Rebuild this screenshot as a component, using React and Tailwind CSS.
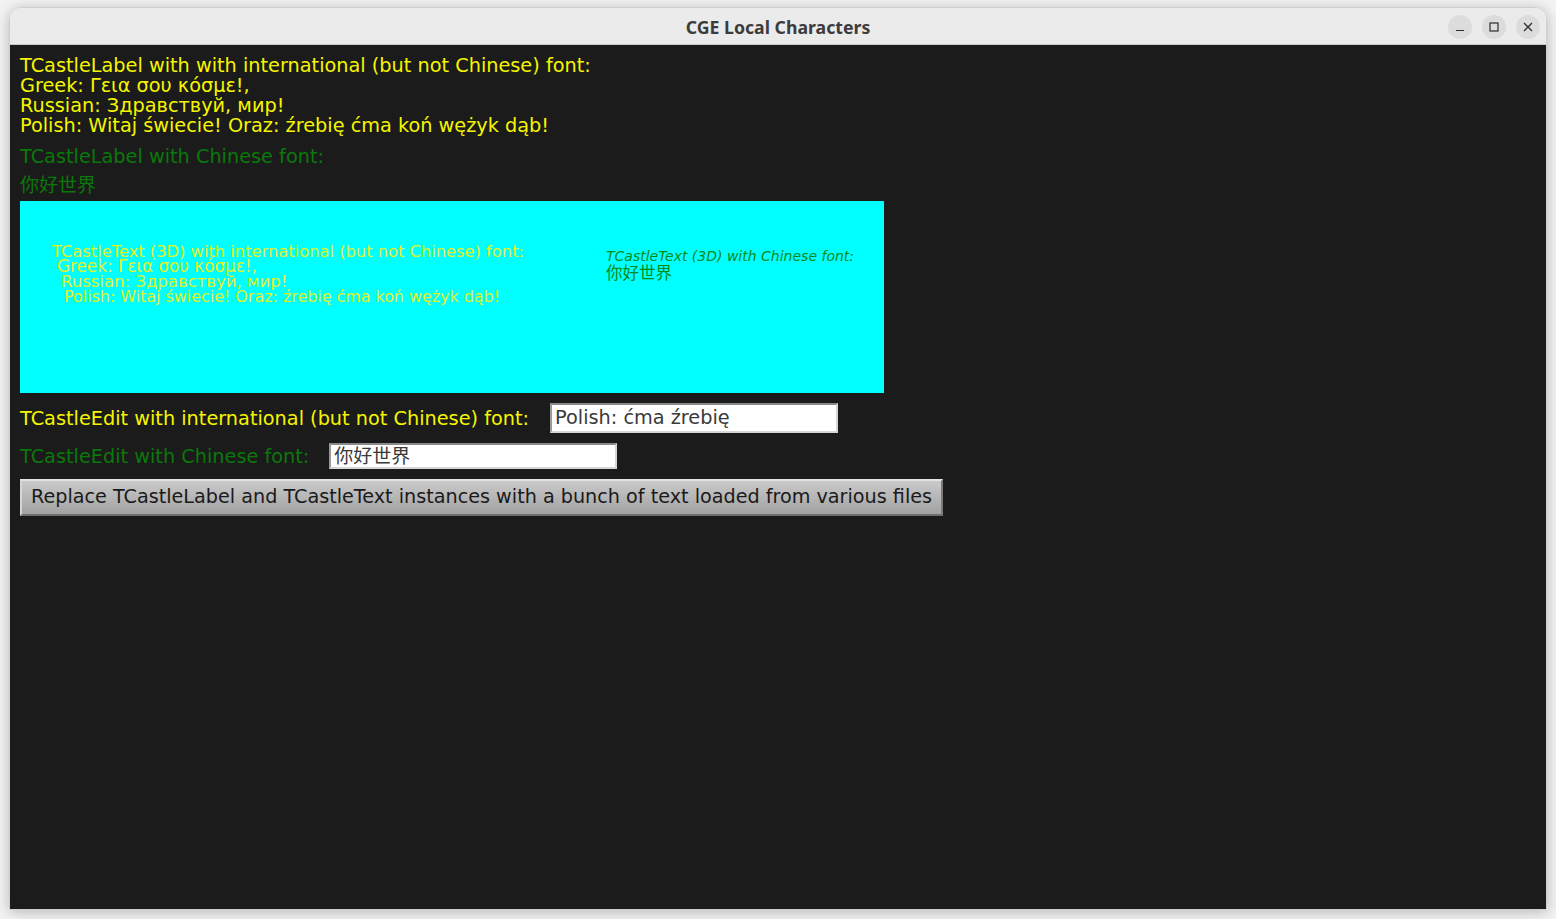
import React from 'react';

const SANS = { fontFamily: '"DejaVu Sans", "Noto Sans CJK SC", sans-serif' };

const TitleButton = ({ children }) => (
  <div className="w-[24px] h-[24px] rounded-full bg-[#dcdcdc] flex items-center justify-center text-[#2e2e2e]">
    {children}
  </div>
);

export default function App() {
  return (
    <div className="w-full h-[919px] bg-[#f3f3f3] pt-[7px] pl-[9px] overflow-hidden">
      <div className="w-[1538px] flex flex-col rounded-t-[12px] shadow-[0_2px_14px_rgba(0,0,0,0.25)] border border-[#cfcfcf] overflow-hidden">
        {/* title bar */}
        <div className="h-[37px] bg-[#ebebeb] border-b border-[#c9c9c9] flex items-center relative">
          <div
            className="flex-1 text-center pt-[2px] text-[17.7px] font-bold text-[#3c3c3c]"
            style={{ fontFamily: '"Noto Sans", "DejaVu Sans", sans-serif' }}
          >
            CGE Local Characters
          </div>
          <div className="absolute right-[6px] top-[7px] flex gap-[10px]">
            <TitleButton>
              <svg width="10" height="10" viewBox="0 0 10 10"><path d="M1 8.5h8" stroke="currentColor" strokeWidth="1.2" /></svg>
            </TitleButton>
            <TitleButton>
              <svg width="10" height="10" viewBox="0 0 10 10"><rect x="1" y="1" width="8" height="8" fill="none" stroke="currentColor" strokeWidth="1.2" /></svg>
            </TitleButton>
            <TitleButton>
              <svg width="10" height="10" viewBox="0 0 10 10"><path d="M1 1l8 8M9 1l-8 8" stroke="currentColor" strokeWidth="1.3" /></svg>
            </TitleButton>
          </div>
        </div>

        {/* content */}
        <div className="h-[864px] bg-[#1b1b1b] pt-[11px] px-[10px]" style={SANS}>
          <div className="text-[19.3px] leading-[20px] text-[#f5f500]">
            <div>TCastleLabel with with international (but not Chinese) font:</div>
            <div>Greek: Γεια σου κόσμε!,</div>
            <div>Russian: Здравствуй, мир!</div>
            <div>Polish: Witaj świecie! Oraz: źrebię ćma koń wężyk dąb!</div>
          </div>
          <div className="mt-[11px] text-[19.3px] leading-[20px] text-[#0a780a]">TCastleLabel with Chinese font:</div>
          <div className="mt-[8px] text-[19px] leading-[20px] text-[#0a780a]">你好世界</div>

          {/* 3D viewport */}
          <div className="mt-[6px] w-[864px] h-[192px] bg-[#00ffff] flex">
            <div className="pl-[32px] pt-[43px] w-[586px] leading-[15px] text-[#e2f21c]">
              <div className="text-[16.3px]">TCastleText (3D) with international (but not Chinese) font:</div>
              <div className="pl-[5px] text-[16.8px]">Greek: Γεια σου κόσμε!,</div>
              <div className="pl-[9px] text-[16.5px]">Russian: Здравствуй, мир!</div>
              <div className="pl-[12px] text-[15.9px]">Polish: Witaj świecie! Oraz: źrebię ćma koń wężyk dąb!</div>
            </div>
            <div className="pt-[47px] text-[#0a8a1a]">
              <div className="italic text-[14px] leading-[16px]">TCastleText (3D) with Chinese font:</div>
              <div className="mt-[1px] text-[16.5px] leading-[18px]">你好世界</div>
            </div>
          </div>

          {/* edits */}
          <div className="mt-[10px] flex items-center gap-[21px]">
            <div className="pt-[2px] text-[19.3px] leading-[28px] text-[#f5f500]">TCastleEdit with international (but not Chinese) font:</div>
            <div className="w-[288px] h-[30px] bg-white border-2 border-t-[#8a8a8a] border-l-[#9a9a9a] border-b-[#d6d6d6] border-r-[#d6d6d6] flex items-center px-[3px] text-[19.3px] text-[#3a3a3a]">
              Polish: ćma źrebię
            </div>
          </div>
          <div className="mt-[10px] flex items-center gap-[20px]">
            <div className="pt-[2px] text-[19.3px] leading-[24px] text-[#0a780a]">TCastleEdit with Chinese font:</div>
            <div className="w-[288px] h-[26px] bg-white border-2 border-t-[#8a8a8a] border-l-[#9a9a9a] border-b-[#d6d6d6] border-r-[#d6d6d6] flex items-center px-[3px] text-[19px] leading-[22px] text-[#3a3a3a]">
              你好世界
            </div>
          </div>

          {/* button */}
          <button className="mt-[10px] w-[923px] h-[37px] bg-gradient-to-b from-[#cacaca] to-[#a2a2a2] border-2 border-t-[#e2e2e2] border-l-[#d6d6d6] border-b-[#6e6e6e] border-r-[#7a7a7a] text-[19.2px] text-[#1a1a1a] flex items-center justify-center">
            Replace TCastleLabel and TCastleText instances with a bunch of text loaded from various files
          </button>
        </div>
      </div>
    </div>
  );
}
